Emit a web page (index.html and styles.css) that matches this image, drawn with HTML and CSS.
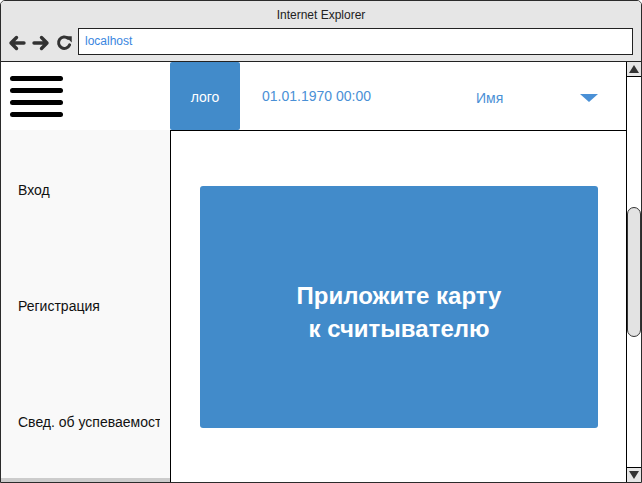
FILE: index.html
```html
<!DOCTYPE html>
<html lang="ru">
<head>
<meta charset="utf-8">
<title>Internet Explorer</title>
<link rel="stylesheet" href="styles.css">
</head>
<body>
<div class="window">
  <div class="chrome">
    <div class="title">Internet Explorer</div>
    <div class="toolbar">
      <div class="nav">
        <svg class="nav-icon" width="18" height="16" viewBox="0 0 18 16"><path d="M16 8H3M8.5 2.5L3 8l5.5 5.5" fill="none" stroke="#333" stroke-width="3.4" stroke-linecap="round" stroke-linejoin="round"/></svg>
        <svg class="nav-icon" width="18" height="16" viewBox="0 0 18 16"><path d="M2 8h13M9.5 2.5L15 8l-5.5 5.5" fill="none" stroke="#333" stroke-width="3.4" stroke-linecap="round" stroke-linejoin="round"/></svg>
        <svg class="nav-icon" width="17" height="17" viewBox="0 0 16 16"><path d="M12.8 10.2A5.4 5.4 0 1 1 11.4 4.1" fill="none" stroke="#333" stroke-width="2.8" stroke-linecap="round"/><path d="M8.8 2h6v6z" fill="#333"/></svg>
      </div>
      <div class="address">localhost</div>
    </div>
  </div>
  <div class="page">
    <aside class="sidebar">
      <div class="burger">
        <span class="bar"></span><span class="bar"></span><span class="bar"></span><span class="bar"></span>
      </div>
      <nav class="menu">
        <div class="menu-item"><span class="menu-label">Вход</span></div>
        <div class="menu-item"><span class="menu-label">Регистрация</span></div>
        <div class="menu-item"><span class="menu-label">Свед. об успеваемости</span></div>
      </nav>
      <div class="sidebar-foot"></div>
    </aside>
    <main class="main">
      <header class="header">
        <div class="logo">лого</div>
        <div class="date">01.01.1970 00:00</div>
        <div class="user">Имя</div>
        <svg class="caret" width="18" height="8" viewBox="0 0 18 8"><path d="M0 0h18L9 8z" fill="#4a90d6"/></svg>
      </header>
      <section class="content">
        <div class="card">
          <div class="card-text">Приложите карту<br>к считывателю</div>
        </div>
      </section>
    </main>
    <div class="scrollbar">
      <div class="sb-btn sb-up"><svg width="10" height="8" viewBox="0 0 10 8"><path d="M0 8h10L5 0z" fill="#333"/></svg></div>
      <div class="sb-track">
        <div class="sb-thumb"></div>
      </div>
      <div class="sb-btn sb-down"><svg width="10" height="8" viewBox="0 0 10 8"><path d="M0 0h10L5 8z" fill="#333"/></svg></div>
    </div>
  </div>
</div>
</body>
</html>
```

FILE: styles.css
```css
* { box-sizing: border-box; }
html, body { margin: 0; padding: 0; }
body {
  width: 642px;
  height: 483px;
  overflow: hidden;
  font-family: "Liberation Sans", Arial, sans-serif;
  background: #fff;
}
.window {
  width: 642px;
  height: 483px;
  border: 1px solid #2b2b2b;
  border-radius: 5px 5px 0 0;
  display: flex;
  flex-direction: column;
  overflow: hidden;
}
.chrome {
  height: 61px;
  flex: none;
  background: #e6e6e6;
  border-bottom: 1px solid #222;
  display: flex;
  flex-direction: column;
}
.title {
  height: 27px;
  line-height: 28px;
  text-align: center;
  font-size: 12px;
  color: #222;
}
.toolbar {
  display: flex;
  align-items: center;
  padding: 1px 8px 0 7px;
  height: 26px;
}
.nav {
  display: flex;
  align-items: center;
  gap: 6px;
  width: 70px;
  margin-top: 2px;
}
.nav-icon { display: block; }
.address {
  flex: 1;
  height: 27px;
  border: 1px solid #222;
  background: #fff;
  font-size: 12px;
  line-height: 25px;
  padding-left: 6px;
  color: #3a86e0;
}
.page {
  flex: 1;
  display: flex;
  min-height: 0;
}
.sidebar {
  width: 169px;
  flex: none;
  display: flex;
  flex-direction: column;
}
.burger {
  height: 68px;
  background: #fff;
  padding: 14px 0 0 9px;
  display: flex;
  flex-direction: column;
  gap: 7px;
}
.bar {
  display: block;
  width: 53px;
  height: 5px;
  border-radius: 3px;
  background: #000;
}
.menu {
  display: flex;
  flex-direction: column;
  background: #f9f9f9;
}
.menu-item {
  height: 116px;
  display: flex;
  align-items: center;
  padding: 4px 10px 0 17px;
  font-size: 14px;
  color: #111;
}
.menu-label {
  flex: 1;
  min-width: 0;
  white-space: nowrap;
  overflow: hidden;
}
.sidebar-foot {
  flex: 1;
  background: #cccccc;
}
.main {
  flex: 1;
  display: flex;
  flex-direction: column;
  min-width: 0;
}
.header {
  height: 68px;
  flex: none;
  display: flex;
  align-items: center;
  background: #fff;
}
.logo {
  width: 70px;
  height: 68px;
  background: #428bca;
  border-radius: 2px;
  color: #fff;
  font-size: 14px;
  display: flex;
  align-items: center;
  justify-content: center;
  padding-top: 1px;
}
.date {
  margin-left: 22px;
  font-size: 14px;
  color: #4a90d6;
  margin-top: -1px;
}
.user {
  margin-left: 105px;
  font-size: 14px;
  color: #4a90d6;
  margin-top: 3px;
}
.caret {
  margin-left: 77px;
  margin-top: 4px;
}
.content {
  flex: 1;
  border-top: 1px solid #000;
  border-left: 1px solid #000;
  background: #fff;
  padding: 55px 28px 54px 29px;
  display: flex;
}
.card {
  flex: 1;
  background: #428bca;
  border-radius: 3px;
  display: flex;
  align-items: center;
  justify-content: center;
  padding-top: 10px;
}
.card-text {
  color: #fff;
  font-weight: bold;
  font-size: 24px;
  line-height: 33px;
  text-align: center;
}
.scrollbar {
  width: 15px;
  flex: none;
  border-left: 1px solid #000;
  display: flex;
  flex-direction: column;
  background: #fff;
}
.sb-btn {
  height: 15px;
  flex: none;
  background: #e6e6e6;
  display: flex;
  align-items: center;
  justify-content: center;
}
.sb-up { border-bottom: 1px solid #000; }
.sb-down { border-top: 1px solid #000; }
.sb-track {
  flex: 1;
  padding-top: 130px;
}
.sb-thumb {
  height: 130px;
  background: #e3e3e3;
  border: 1px solid #333;
  border-radius: 7px;
}
```
